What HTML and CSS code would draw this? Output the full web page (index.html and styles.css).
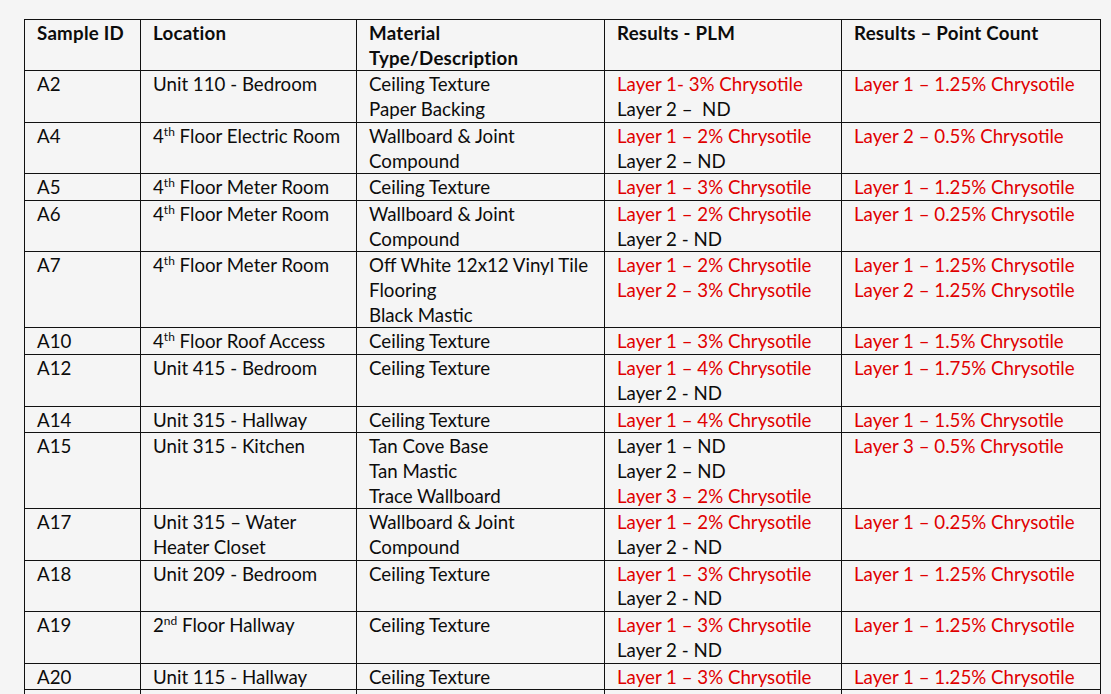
FILE: index.html
```html
<!DOCTYPE html>
<html lang="en">
<head>
<meta charset="utf-8">
<title>Sample Results</title>
<link rel="stylesheet" href="styles.css">
</head>
<body>
<table class="results">
  <colgroup>
    <col class="c-id"><col class="c-loc"><col class="c-mat"><col class="c-plm"><col class="c-pc">
  </colgroup>
  <thead>
    <tr>
      <th>Sample ID</th>
      <th>Location</th>
      <th><span class="ln">Material</span><span class="ln">Type/Description</span></th>
      <th>Results - PLM</th>
      <th>Results – Point Count</th>
    </tr>
  </thead>
  <tbody>
    <tr>
      <td>A2</td>
      <td>Unit 110 - Bedroom</td>
      <td><span class="ln">Ceiling Texture</span><span class="ln">Paper Backing</span></td>
      <td><span class="ln pos">Layer 1- 3% Chrysotile</span><span class="ln">Layer 2 –&nbsp; ND</span></td>
      <td><span class="ln pos">Layer 1 – 1.25% Chrysotile</span></td>
    </tr>
    <tr>
      <td>A4</td>
      <td>4<sup class="sup">th</sup> Floor Electric Room</td>
      <td><span class="ln">Wallboard &amp; Joint</span><span class="ln">Compound</span></td>
      <td><span class="ln pos">Layer 1 – 2% Chrysotile</span><span class="ln">Layer 2 – ND</span></td>
      <td><span class="ln pos">Layer 2 – 0.5% Chrysotile</span></td>
    </tr>
    <tr>
      <td>A5</td>
      <td>4<sup class="sup">th</sup> Floor Meter Room</td>
      <td>Ceiling Texture</td>
      <td><span class="ln pos">Layer 1 – 3% Chrysotile</span></td>
      <td><span class="ln pos">Layer 1 – 1.25% Chrysotile</span></td>
    </tr>
    <tr>
      <td>A6</td>
      <td>4<sup class="sup">th</sup> Floor Meter Room</td>
      <td><span class="ln">Wallboard &amp; Joint</span><span class="ln">Compound</span></td>
      <td><span class="ln pos">Layer 1 – 2% Chrysotile</span><span class="ln">Layer 2 - ND</span></td>
      <td><span class="ln pos">Layer 1 – 0.25% Chrysotile</span></td>
    </tr>
    <tr>
      <td>A7</td>
      <td>4<sup class="sup">th</sup> Floor Meter Room</td>
      <td><span class="ln">Off White 12x12 Vinyl Tile</span><span class="ln">Flooring</span><span class="ln">Black Mastic</span></td>
      <td><span class="ln pos">Layer 1 – 2% Chrysotile</span><span class="ln pos">Layer 2 – 3% Chrysotile</span></td>
      <td><span class="ln pos">Layer 1 – 1.25% Chrysotile</span><span class="ln pos">Layer 2 – 1.25% Chrysotile</span></td>
    </tr>
    <tr>
      <td>A10</td>
      <td>4<sup class="sup">th</sup> Floor Roof Access</td>
      <td>Ceiling Texture</td>
      <td><span class="ln pos">Layer 1 – 3% Chrysotile</span></td>
      <td><span class="ln pos">Layer 1 – 1.5% Chrysotile</span></td>
    </tr>
    <tr>
      <td>A12</td>
      <td>Unit 415 - Bedroom</td>
      <td>Ceiling Texture</td>
      <td><span class="ln pos">Layer 1 – 4% Chrysotile</span><span class="ln">Layer 2 - ND</span></td>
      <td><span class="ln pos">Layer 1 – 1.75% Chrysotile</span></td>
    </tr>
    <tr>
      <td>A14</td>
      <td>Unit 315 - Hallway</td>
      <td>Ceiling Texture</td>
      <td><span class="ln pos">Layer 1 – 4% Chrysotile</span></td>
      <td><span class="ln pos">Layer 1 – 1.5% Chrysotile</span></td>
    </tr>
    <tr>
      <td>A15</td>
      <td>Unit 315 - Kitchen</td>
      <td><span class="ln">Tan Cove Base</span><span class="ln">Tan Mastic</span><span class="ln">Trace Wallboard</span></td>
      <td><span class="ln">Layer 1 – ND</span><span class="ln">Layer 2 – ND</span><span class="ln pos">Layer 3 – 2% Chrysotile</span></td>
      <td><span class="ln pos">Layer 3 – 0.5% Chrysotile</span></td>
    </tr>
    <tr>
      <td>A17</td>
      <td><span class="ln">Unit 315 – Water</span><span class="ln">Heater Closet</span></td>
      <td><span class="ln">Wallboard &amp; Joint</span><span class="ln">Compound</span></td>
      <td><span class="ln pos">Layer 1 – 2% Chrysotile</span><span class="ln">Layer 2 - ND</span></td>
      <td><span class="ln pos">Layer 1 – 0.25% Chrysotile</span></td>
    </tr>
    <tr>
      <td>A18</td>
      <td>Unit 209 - Bedroom</td>
      <td>Ceiling Texture</td>
      <td><span class="ln pos">Layer 1 – 3% Chrysotile</span><span class="ln">Layer 2 - ND</span></td>
      <td><span class="ln pos">Layer 1 – 1.25% Chrysotile</span></td>
    </tr>
    <tr>
      <td>A19</td>
      <td>2<sup class="sup">nd</sup> Floor Hallway</td>
      <td>Ceiling Texture</td>
      <td><span class="ln pos">Layer 1 – 3% Chrysotile</span><span class="ln">Layer 2 - ND</span></td>
      <td><span class="ln pos">Layer 1 – 1.25% Chrysotile</span></td>
    </tr>
    <tr>
      <td>A20</td>
      <td>Unit 115 - Hallway</td>
      <td>Ceiling Texture</td>
      <td><span class="ln pos">Layer 1 – 3% Chrysotile</span></td>
      <td><span class="ln pos">Layer 1 – 1.25% Chrysotile</span></td>
    </tr>
    <tr class="cut">
      <td>&nbsp;</td><td>&nbsp;</td><td>&nbsp;</td><td>&nbsp;</td><td>&nbsp;</td>
    </tr>
  </tbody>
</table>
</body>
</html>
```
FILE: styles.css
```css
html, body {
  margin: 0;
  background: #f5f5f5;
}
body {
  padding: 19px 0 0 24px;
  font-family: "Lato", "Liberation Sans", sans-serif;
  font-size: 18.7px;
  color: #0c0c0c;
  overflow: hidden;
}
.results {
  border-collapse: collapse;
  table-layout: fixed;
  width: 1076px;
}
.c-id { width: 116px; }
.c-loc { width: 216px; }
.c-mat { width: 248px; }
.c-plm { width: 237px; }
.c-pc { width: 259px; }
.results th,
.results td {
  border: 1px solid #111111;
  vertical-align: top;
  text-align: left;
  padding: 1px 4px 0 12px;
  line-height: 24.7px;
  white-space: nowrap;
}
.results th {
  font-weight: 700;
  letter-spacing: 0.25px;
}
.ln {
  display: block;
}
.pos {
  color: #e00000;
}
.sup {
  font-size: 0.64em;
  line-height: 0;
  vertical-align: 0.6em;
}
.cut td {
  height: 25px;
}
```
